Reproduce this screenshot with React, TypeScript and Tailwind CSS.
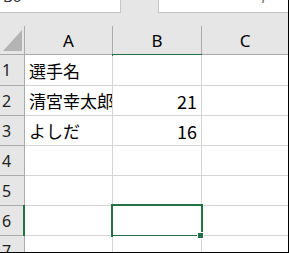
import React from "react";

const G = "border-[#d4d4d4]";
const H = "border-[#ababab]";

function RowHead({ n, h, sel }: { n: number; h: string; sel?: boolean }) {
  return (
    <div
      className={`relative ${h} w-[25px] shrink-0 bg-[#e6e6e6] border-r border-b ${H} flex items-center pl-[2px] text-[16px] text-[#222] leading-none`}
      style={{ fontFamily: '"Noto Sans", "Liberation Sans", sans-serif' }}
    >
      {n}
      {sel && <div className="absolute right-[-1px] top-[-1px] bottom-[-1px] w-[2px] bg-[#217346]" />}
    </div>
  );
}

function Row({
  n,
  h,
  a,
  b,
  sel,
}: {
  n: number;
  h: string;
  a?: string;
  b?: string;
  sel?: boolean;
}) {
  return (
    <div className={`flex ${h}`}>
      <RowHead n={n} h={h} sel={sel} />
      <div
        className={`w-[88px] shrink-0 border-r border-b ${G} bg-white flex items-center pl-[4px] overflow-hidden whitespace-nowrap text-[17px] leading-none text-black`}
        style={{ fontFamily: '"Noto Sans CJK JP", sans-serif' }}
      >
        {a}
      </div>
      <div
        className={`relative w-[89px] shrink-0 border-r border-b ${G} bg-white flex items-center justify-end pr-[4px] text-[18px] leading-none text-black`}
        style={{ fontFamily: '"Noto Sans CJK JP", sans-serif' }}
      >
        {b}
        {sel && (
          <>
            <div className="absolute left-[-2px] top-[-2px] right-[-2px] bottom-[-2px] border-2 border-[#217346]" />
            <div className="absolute right-[-3px] bottom-[-4px] w-[7px] h-[7px] bg-[#217346] border border-white z-10" />
          </>
        )}
      </div>
      <div className={`flex-1 border-b ${G} bg-white`} />
    </div>
  );
}

export default function App() {
  return (
    <div className="w-[289px] h-[253px] overflow-hidden bg-[#e6e6e6] border-r border-b border-black box-border flex flex-col">
      {/* top bar */}
      <div className="h-[26px] shrink-0 flex items-start">
        <div className="relative w-[121px] h-[13px] bg-white border-r border-b border-[#c6c6c6] overflow-hidden">
          <span
            className="absolute left-[3px] top-[-11px] text-[15px] leading-none text-[#333]"
            style={{ fontFamily: '"Noto Sans", sans-serif' }}
          >
            B6
          </span>
        </div>
        <div className="w-[37px]" />
        <div className="relative flex-1 h-[13px] bg-white border-l border-b border-[#c6c6c6] overflow-hidden">
          <span
            className="absolute left-[103px] top-[-12px] text-[15px] italic leading-none text-[#666]"
            style={{ fontFamily: '"Liberation Serif", serif' }}
          >
            fx
          </span>
        </div>
      </div>
      {/* column headers */}
      <div
        className="flex h-[29px] shrink-0 text-[17px] leading-none text-black"
        style={{ fontFamily: '"Noto Sans", "Liberation Sans", sans-serif' }}
      >
        <div className={`relative w-[25px] shrink-0 border-r border-b ${H} bg-[#e6e6e6]`}>
          <svg className="absolute left-[3px] top-[4px]" width="19" height="21" viewBox="0 0 19 21">
            <polygon points="0,21 19,21 19,0" fill="#b4b4b4" />
          </svg>
        </div>
        <div className={`w-[88px] shrink-0 border-r border-b ${H} bg-[#e6e6e6] flex items-center justify-center`}>A</div>
        <div className={`relative w-[89px] shrink-0 border-r border-b ${H} bg-[#e6e6e6] flex items-center justify-center`}>
          B
          <div className="absolute left-[-1px] right-[-1px] bottom-[-2px] h-[2px] bg-[#217346]" />
        </div>
        <div className={`flex-1 border-b ${H} bg-[#e6e6e6] flex items-center justify-center`}>C</div>
      </div>
      <Row n={1} h="h-[31px]" a="選手名" />
      <Row n={2} h="h-[30px]" a="清宮幸太郎" b="21" />
      <Row n={3} h="h-[30px]" a="よしだ" b="16" />
      <Row n={4} h="h-[30px]" />
      <Row n={5} h="h-[30px]" />
      <Row n={6} h="h-[30px]" sel />
      <Row n={7} h="h-[30px]" />
    </div>
  );
}
